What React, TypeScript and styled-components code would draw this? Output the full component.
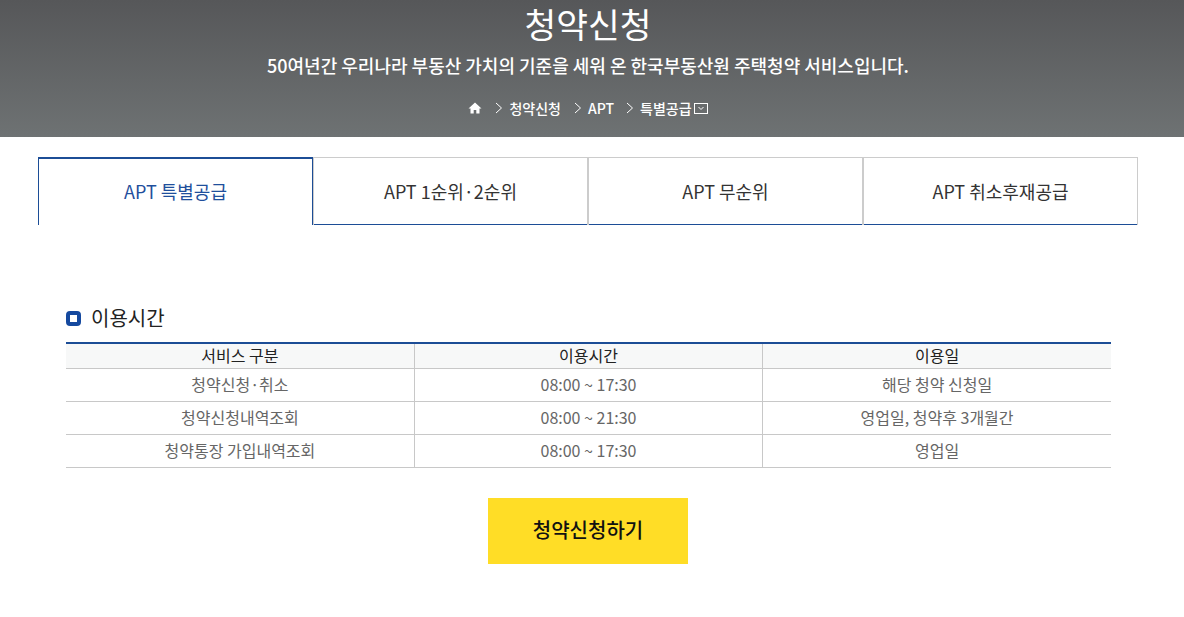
import React from "react";
import styled, { createGlobalStyle } from "styled-components";

const GlobalStyle = createGlobalStyle`
  html, body {
    margin: 0;
    padding: 0;
    background: #fff;
    overflow: hidden;
    font-family: "Noto Sans CJK KR", "Noto Sans", sans-serif;
  }
  * { box-sizing: border-box; }
`;

const Hero = styled.header`
  height: 137px;
  padding-right: 8px;
  background: linear-gradient(180deg, #565759 0%, #6e7273 100%);
  color: #fff;
  display: flex;
  flex-direction: column;
  align-items: center;
`;

const HeroTitle = styled.h1`
  margin: 0;
  height: 47px;
  line-height: 47px;
  font-size: 34.5px;
  font-weight: 400;
`;

const HeroSub = styled.p`
  margin: 0;
  height: 36px;
  line-height: 36px;
  font-size: 18px;
  font-weight: 500;
`;

const Crumbs = styled.nav`
  margin-top: 6px;
  height: 38px;
  display: flex;
  align-items: center;
  font-size: 14px;
  font-weight: 500;
`;

const CrumbItem = styled.span<{ $gap: number }>`
  display: flex;
  align-items: center;
  margin-right: ${(p) => p.$gap}px;
`;

const Tabs = styled.div`
  display: flex;
  margin: 20px 46px 0 38px;
  height: 68px;
`;

const Tab = styled.div<{ $active?: boolean }>`
  flex: 1;
  display: flex;
  align-items: center;
  justify-content: center;
  padding-bottom: 2px;
  font-size: 18px;
  color: ${(p) => (p.$active ? "#1f4f9c" : "#333")};
  border-style: solid;
  border-color: ${(p) => (p.$active ? "#1c4d96" : "#ccc")};
  border-width: ${(p) => (p.$active ? "2px 1px 0 1px" : "1px 1px 0 1px")};
  box-shadow: ${(p) => (p.$active ? "none" : "inset 0 -1px 0 #1c4d96")};
`;

const Section = styled.section`
  margin: 75px 73px 0 66px;
`;

const SectionHead = styled.div`
  display: flex;
  align-items: center;
  gap: 10px;
  height: 36px;
  padding-bottom: 2px;
  font-size: 20px;
  color: #222;
`;

const Bullet = styled.i`
  width: 15px;
  height: 15px;
  margin-top: 2px;
  border: 4px solid #15499f;
  border-radius: 4px;
  background: #fff;
`;

const Table = styled.table`
  width: 100%;
  margin-top: 6px;
  border-collapse: collapse;
  table-layout: fixed;
  border-top: 2px solid #1c4d96;
`;

const Th = styled.th`
  height: 25px;
  padding: 0 0 1px;
  background: #f7f8f8;
  font-size: 16px;
  font-weight: 400;
  line-height: 22px;
  color: #222;
  border-bottom: 1px solid #c8c8c8;
  border-left: 1px solid #c8c8c8;
  &:first-child { border-left: 0; }
`;

const Td = styled.td`
  height: 33px;
  padding: 0 0 1px;
  text-align: center;
  font-size: 16px;
  line-height: 24px;
  color: #666;
  border-bottom: 1px solid #c8c8c8;
  border-left: 1px solid #c8c8c8;
  &:first-child { border-left: 0; }
`;

const ButtonRow = styled.div`
  display: flex;
  justify-content: center;
  margin-top: 30px;
  padding-right: 1px;
`;

const ApplyButton = styled.button`
  width: 200px;
  height: 66px;
  border: 0;
  padding: 0 0 2px;
  background: #ffdd26;
  color: #111;
  font-family: inherit;
  font-size: 20px;
  font-weight: 500;
`;

const HomeIcon = () => (
  <svg width="14" height="12" viewBox="0 0 14 12">
    <path fill="#fff" d="M7 0.5 0.5 6.5H2.5V11.5H5.7V8H8.3V11.5H11.5V6.5H13.5Z" />
  </svg>
);

const Chevron = () => (
  <svg width="8" height="12" viewBox="0 0 8 12" style={{ marginRight: 6 }}>
    <path fill="none" stroke="#fff" strokeWidth="1" d="M1 1l5.5 5L1 11" />
  </svg>
);

const DropBox = () => (
  <svg width="14" height="11" viewBox="0 0 14 11" style={{ marginLeft: 2 }}>
    <rect x="0.5" y="0.5" width="13" height="10" fill="none" stroke="#fff" />
    <path fill="none" stroke="#fff" d="M4.5 4l2.5 2.5L9.5 4" />
  </svg>
);

const rows = [
  ["청약신청·취소", "08:00 ~ 17:30", "해당 청약 신청일"],
  ["청약신청내역조회", "08:00 ~ 21:30", "영업일, 청약후 3개월간"],
  ["청약통장 가입내역조회", "08:00 ~ 17:30", "영업일"],
];

const App: React.FC = () => (
  <>
    <GlobalStyle />
    <Hero>
      <HeroTitle>청약신청</HeroTitle>
      <HeroSub>50여년간 우리나라 부동산 가치의 기준을 세워 온 한국부동산원 주택청약 서비스입니다.</HeroSub>
      <Crumbs>
        <CrumbItem $gap={13}><HomeIcon /></CrumbItem>
        <CrumbItem $gap={13}><Chevron />청약신청</CrumbItem>
        <CrumbItem $gap={12}><Chevron />APT</CrumbItem>
        <CrumbItem $gap={0}><Chevron />특별공급<DropBox /></CrumbItem>
      </Crumbs>
    </Hero>
    <Tabs>
      <Tab $active>APT 특별공급</Tab>
      <Tab>APT 1순위·2순위</Tab>
      <Tab>APT 무순위</Tab>
      <Tab>APT 취소후재공급</Tab>
    </Tabs>
    <Section>
      <SectionHead><Bullet />이용시간</SectionHead>
      <Table>
        <thead>
          <tr>
            <Th>서비스 구분</Th>
            <Th>이용시간</Th>
            <Th>이용일</Th>
          </tr>
        </thead>
        <tbody>
          {rows.map((r) => (
            <tr key={r[0]}>
              {r.map((c) => <Td key={c}>{c}</Td>)}
            </tr>
          ))}
        </tbody>
      </Table>
      <ButtonRow>
        <ApplyButton>청약신청하기</ApplyButton>
      </ButtonRow>
    </Section>
  </>
);

export default App;
